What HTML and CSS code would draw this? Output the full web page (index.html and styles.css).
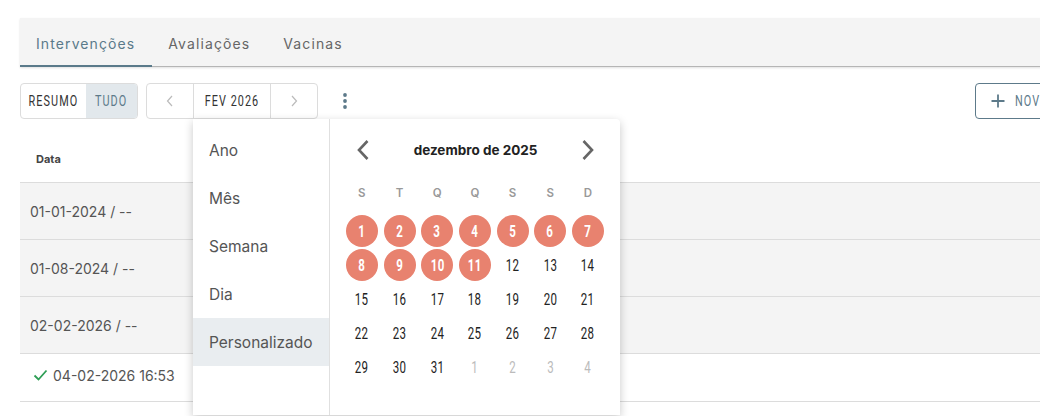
FILE: index.html
```html
<!DOCTYPE html>
<html lang="pt">
<head>
<meta charset="utf-8">
<link rel="stylesheet" href="styles.css">
</head>
<body>
<div class="page">
  <nav class="tabs">
    <div class="tab active">Intervenções</div>
    <div class="tab">Avaliações</div>
    <div class="tab">Vacinas</div>
  </nav>

  <div class="toolbar">
    <div class="group">
      <div class="gbtn resumo"><span class="cond">RESUMO</span></div>
      <div class="gbtn tudo on"><span class="cond">TUDO</span></div>
    </div>
    <div class="group nav">
      <div class="gbtn arrow"><svg width="8" height="12" viewBox="0 0 8 12"><path d="M6 1 L1.5 6 L6 11" fill="none" stroke="#bbb" stroke-width="1.2"/></svg></div>
      <div class="gbtn month"><span class="cond">FEV 2026</span></div>
      <div class="gbtn arrow"><svg width="8" height="12" viewBox="0 0 8 12"><path d="M2 1 L6.5 6 L2 11" fill="none" stroke="#bbb" stroke-width="1.2"/></svg></div>
    </div>
    <div class="kebab"><svg width="6" height="18" viewBox="0 0 6 18"><circle cx="3" cy="3" r="1.9" fill="#5d7a8a"/><circle cx="3" cy="9" r="1.9" fill="#5d7a8a"/><circle cx="3" cy="15" r="1.9" fill="#5d7a8a"/></svg></div>
    <div class="spacer"></div>
    <div class="novo"><svg width="14" height="14" viewBox="0 0 14 14"><path d="M7 0.5 V13.5 M0.5 7 H13.5" stroke="#5d7a8a" stroke-width="1.8"/></svg><span class="cond left">NOVO</span></div>
  </div>

  <div class="table">
    <div class="thead">Data</div>
    <div class="row shade">01-01-2024 / --</div>
    <div class="row shade">01-08-2024 / --</div>
    <div class="row shade">02-02-2026 / --</div>
    <div class="row short"><svg class="check" width="15" height="12" viewBox="0 0 15 12"><path d="M1.5 6.5 L5.5 10.5 L13.5 1.5" fill="none" stroke="#2e9e55" stroke-width="1.8"/></svg>04-02-2026 16:53</div>
  </div>

  <div class="popup">
    <ul class="menu">
      <li>Ano</li>
      <li>Mês</li>
      <li>Semana</li>
      <li>Dia</li>
      <li class="sel">Personalizado</li>
    </ul>
    <div class="cal">
      <div class="cal-head">
        <svg width="14" height="22" viewBox="0 0 14 22"><path d="M11.5 2 L3 11 L11.5 20" fill="none" stroke="#666" stroke-width="2.6"/></svg>
        <span class="title">dezembro de 2025</span>
        <svg width="14" height="22" viewBox="0 0 14 22"><path d="M2.5 2 L11 11 L2.5 20" fill="none" stroke="#666" stroke-width="2.6"/></svg>
      </div>
      <div class="grid wd">
        <span>S</span><span>T</span><span>Q</span><span>Q</span><span>S</span><span>S</span><span>D</span>
      </div>
      <div class="grid days">
        <span class="hl"><i>1</i></span><span class="hl"><i>2</i></span><span class="hl"><i>3</i></span><span class="hl"><i>4</i></span><span class="hl"><i>5</i></span><span class="hl"><i>6</i></span><span class="hl"><i>7</i></span>
        <span class="hl"><i>8</i></span><span class="hl"><i>9</i></span><span class="hl"><i>10</i></span><span class="hl"><i>11</i></span><span><i>12</i></span><span><i>13</i></span><span><i>14</i></span>
        <span><i>15</i></span><span><i>16</i></span><span><i>17</i></span><span><i>18</i></span><span><i>19</i></span><span><i>20</i></span><span><i>21</i></span>
        <span><i>22</i></span><span><i>23</i></span><span><i>24</i></span><span><i>25</i></span><span><i>26</i></span><span><i>27</i></span><span><i>28</i></span>
        <span><i>29</i></span><span><i>30</i></span><span><i>31</i></span><span class="out"><i>1</i></span><span class="out"><i>2</i></span><span class="out"><i>3</i></span><span class="out"><i>4</i></span>
      </div>
    </div>
  </div>
</div>
</body>
</html>
```

FILE: styles.css
```css
html, body {
  margin: 0;
  padding: 0;
  background: #fff;
  overflow: hidden;
}
body {
  font-family: "Inter", "Roboto", sans-serif;
  color: #555;
}
.page {
  position: relative;
  width: 1100px;
  height: 416px;
  padding: 18px 0 0 20px;
  box-sizing: border-box;
}
.tabs {
  display: flex;
  height: 49px;
  background: #f4f4f4;
  border-bottom: 1px solid #b5b5b5;
  box-shadow: 0 1px 2px rgba(0,0,0,0.12);
  box-sizing: border-box;
}
.tab {
  padding: 2px 17px 0 16px;
  font-size: 14px;
  letter-spacing: 1.1px;
  color: #666;
  display: flex;
  align-items: center;
  box-sizing: border-box;
}
.tab.active {
  color: #5a7a8a;
  border-bottom: 2px solid #5a7a8a;
  margin-bottom: -1px;
  padding-top: 3px;
}
.toolbar {
  display: flex;
  align-items: center;
  margin-top: 16px;
  height: 36px;
}
.group {
  display: flex;
  border: 1px solid #dcdcdc;
  border-radius: 4px;
  height: 36px;
  box-sizing: border-box;
  overflow: hidden;
}
.group.nav { margin-left: 8px; }
.gbtn {
  display: flex;
  align-items: center;
  justify-content: center;
  color: #333;
}
.cond {
  display: inline-block;
  white-space: nowrap;
  font-family: "Roboto", sans-serif;
  font-size: 15.5px;
  font-weight: 400;
  letter-spacing: 1.5px;
  transform: scaleX(0.7);
}
.cond.left { transform-origin: left center; }
.gbtn.resumo { width: 65px; }
.gbtn.tudo { width: 51px; }
.gbtn.on {
  background: #e2e8ec;
  color: #5d7a8a;
}
.gbtn.arrow {
  width: 46px;
}
.gbtn.month {
  width: 76px;
  border-left: 1px solid #dcdcdc;
  border-right: 1px solid #dcdcdc;
}
.kebab {
  margin-left: 24px;
  display: flex;
  align-items: center;
}
.spacer { flex: 1; }
.novo {
  display: flex;
  align-items: center;
  gap: 10px;
  height: 36px;
  width: 110px;
  box-sizing: border-box;
  border: 1px solid #5d7a8a;
  border-radius: 4px;
  padding-left: 15px;
  margin-right: 15px;
  color: #5d7a8a;
  overflow: hidden;
}
.table {
  margin-top: 1px;
}
.thead {
  height: 63px;
  box-sizing: border-box;
  display: flex;
  align-items: flex-end;
  padding: 0 0 16px 16px;
  font-size: 11px;
  font-weight: 700;
  color: #444;
  border-bottom: 1px solid #dcdcdc;
}
.row {
  height: 57px;
  box-sizing: border-box;
  display: flex;
  align-items: center;
  padding-left: 10px;
  font-size: 14px;
  color: #555;
  border-bottom: 1px solid #dcdcdc;
}
.row.shade { background: #f4f4f4; }
.row.short {
  height: 48px;
  padding-left: 13px;
  align-items: flex-start;
  padding-top: 13px;
}
.check { margin-right: 5px; margin-top: 2px; }

.popup {
  position: absolute;
  left: 193px;
  top: 119px;
  width: 427px;
  height: 296px;
  background: #fff;
  border-radius: 0 4px 0 0;
  box-shadow: 0 3px 10px rgba(0,0,0,0.22);
  display: flex;
}
.menu {
  list-style: none;
  margin: 0;
  padding: 7px 0 0 0;
  width: 136px;
  border-right: 1px solid #e0e0e0;
}
.menu li {
  height: 48px;
  display: flex;
  align-items: center;
  padding-left: 16px;
  font-size: 15.5px;
  color: #555;
}
.menu li.sel { background: #e9edf0; }
.cal {
  flex: 1;
  padding: 16px 13px 0 13px;
}
.cal-head {
  height: 30px;
  display: flex;
  align-items: center;
  justify-content: space-between;
  padding: 0 12px 0 13px;
}
.cal-head .title {
  font-size: 13.5px;
  font-weight: 700;
  color: #222;
}
.grid {
  display: grid;
  grid-template-columns: repeat(7, 37.7px);
  justify-items: center;
  align-items: center;
}
.wd {
  margin-top: 16px;
  height: 24px;
}
.wd span {
  font-size: 11.5px;
  font-weight: 600;
  color: #999;
}
.days {
  margin-top: 9px;
  grid-auto-rows: 34px;
}
.days span {
  width: 32px;
  height: 32px;
  border-radius: 50%;
  display: flex;
  align-items: center;
  justify-content: center;
  color: #222;
}
.days i {
  font-style: normal;
  display: inline-block;
  font-family: "Roboto", sans-serif;
  font-size: 16px;
  letter-spacing: 0.5px;
  transform: scaleX(0.72);
}
.days span.hl {
  background: #e8826f;
  color: #fff;
}
.days span.hl i { font-weight: 700; }
.days span.out { color: #bbb; }
```
